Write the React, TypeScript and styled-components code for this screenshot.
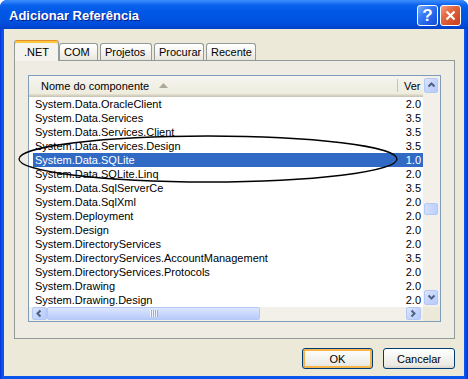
import React from 'react';
import styled, { createGlobalStyle } from 'styled-components';

const GlobalStyle = createGlobalStyle`
  html, body {
    margin: 0;
    padding: 0;
    background: #ffffff;
  }
  body {
    font-family: "Liberation Sans", Arial, sans-serif;
    font-size: 11px;
    color: #000;
    overflow: hidden;
  }
`;

const items: { name: string; version: string }[] = [
  { name: 'System.Data.OracleClient', version: '2.0' },
  { name: 'System.Data.Services', version: '3.5' },
  { name: 'System.Data.Services.Client', version: '3.5' },
  { name: 'System.Data.Services.Design', version: '3.5' },
  { name: 'System.Data.SQLite', version: '1.0' },
  { name: 'System.Data.SQLite.Linq', version: '2.0' },
  { name: 'System.Data.SqlServerCe', version: '3.5' },
  { name: 'System.Data.SqlXml', version: '2.0' },
  { name: 'System.Deployment', version: '2.0' },
  { name: 'System.Design', version: '2.0' },
  { name: 'System.DirectoryServices', version: '2.0' },
  { name: 'System.DirectoryServices.AccountManagement', version: '3.5' },
  { name: 'System.DirectoryServices.Protocols', version: '2.0' },
  { name: 'System.Drawing', version: '2.0' },
  { name: 'System.Drawing.Design', version: '2.0' },
];

const tabs = [
  { label: '.NET', width: 45 },
  { label: 'COM', width: 39 },
  { label: 'Projetos', width: 52 },
  { label: 'Procurar', width: 50 },
  { label: 'Recente', width: 50 },
];

const Window = styled.div`
  position: relative;
  width: 468px;
  height: 379px;
  display: flex;
  flex-direction: column;
  background: linear-gradient(to right, #0831d9 0, #0a55ec 2px, #0a55ec 465px, #0831d9 468px);
  border-radius: 7px 7px 0 0;
  overflow: hidden;
`;

const TitleBar = styled.div`
  flex: none;
  height: 29px;
  display: flex;
  align-items: center;
  padding: 0 7px 0 9px;
  box-sizing: border-box;
  background: linear-gradient(
    to bottom,
    #3d8cff 0px,
    #2c7ff8 2px,
    #0a63ee 5px,
    #0058e6 11px,
    #0054e2 19px,
    #004ad8 25px,
    #0040c8 29px
  );
`;

const Title = styled.div`
  font-family: "Liberation Sans", Arial, sans-serif;
  font-weight: bold;
  font-size: 13px;
  color: #ffffff;
  text-shadow: 1px 1px 0 #0a1a8a;
  padding-top: 2px;
`;

const TitleButtons = styled.div`
  margin-left: auto;
  display: flex;
  gap: 2px;
  padding-top: 2px;
`;

const CaptionButton = styled.div<{ $kind: 'help' | 'close' }>`
  width: 21px;
  height: 21px;
  box-sizing: border-box;
  border: 1px solid #ffffff;
  border-radius: 3px;
  display: flex;
  align-items: center;
  justify-content: center;
  color: #ffffff;
  font-family: "Liberation Sans", Arial, sans-serif;
  font-weight: bold;
  font-size: 17px;
  background: ${p =>
    p.$kind === 'help'
      ? 'linear-gradient(135deg, #7fb0ff 0%, #3a7cf5 35%, #1f5fe6 70%, #1a4fd0 100%)'
      : 'linear-gradient(135deg, #f5a080 0%, #e36a42 35%, #d5502b 70%, #c0401f 100%)'};
`;

const Client = styled.div`
  flex: 1;
  margin: 0 4px 3px;
  background: #ece9d8;
  display: flex;
  flex-direction: column;
  padding: 11px 9px 7px 10px;
  min-height: 0;
`;

const TabStrip = styled.div`
  flex: none;
  height: 20px;
  display: flex;
  align-items: flex-end;
  gap: 2px;
`;

const Tab = styled.div<{ $active?: boolean; $w: number }>`
  position: relative;
  z-index: ${p => (p.$active ? 2 : 1)};
  box-sizing: border-box;
  width: ${p => p.$w}px;
  height: ${p => (p.$active ? 21 : 17)}px;
  margin-bottom: ${p => (p.$active ? -1 : 0)}px;
  margin-right: ${p => (p.$active ? -2 : 0)}px;
  padding-left: ${p => (p.$active ? 9 : 4)}px;
  padding-top: ${p => (p.$active ? 4 : 1)}px;
  line-height: 15px;
  white-space: nowrap;
  border: 1px solid #919b9c;
  border-bottom: none;
  border-radius: 3px 3px 0 0;
  background: ${p =>
    p.$active
      ? '#f4f3ee'
      : 'linear-gradient(to bottom, #ffffff 0%, #f4f3ee 55%, #e8e6dc 100%)'};
  ${p => p.$active && 'border-top: 1px solid #e68b2c; box-shadow: inset 0 2px 0 #ffc73c;'}
`;

const Panel = styled.div`
  flex: 1;
  min-height: 0;
  display: flex;
  border: 1px solid #919b9c;
  background: #efede3;
  padding: 14px 13px 16px 13px;
`;

const ListView = styled.div`
  flex: 1;
  display: grid;
  grid-template-columns: 1fr 17px;
  grid-template-rows: 1fr 14px;
  border: 1px solid #7f9db9;
  background: #ffffff;
  min-height: 0;
`;

const Content = styled.div`
  overflow: hidden;
  display: flex;
  flex-direction: column;
`;

const Header = styled.div`
  flex: none;
  height: 21px;
  display: grid;
  grid-template-columns: 369px 25px;
  background: linear-gradient(to bottom, #f6f5ef 0%, #ebeadb 100%);
  box-shadow: inset 0 -1px 0 #cbc7b8, inset 0 -2px 0 #d6d2c2, inset 0 -3px 0 #e2decd;
`;

const HeaderCell = styled.div<{ $pad: number; $divider?: boolean }>`
  position: relative;
  display: flex;
  align-items: center;
  gap: 10px;
  padding-left: ${p => p.$pad}px;
  padding-bottom: 2px;
  white-space: nowrap;
  overflow: hidden;
  ${p =>
    p.$divider &&
    `&::after {
      content: '';
      position: absolute;
      right: 0;
      top: 3px;
      bottom: 5px;
      width: 1px;
      background: #c7c5b2;
      box-shadow: 1px 0 0 #ffffff;
    }`}
`;

const Row = styled.div<{ $selected?: boolean }>`
  flex: none;
  height: 14px;
  margin-left: 4px;
  display: grid;
  grid-template-columns: 365px 25px;
  line-height: 14px;
  white-space: nowrap;
  background: ${p => (p.$selected ? '#316ac5' : 'transparent')};
  color: ${p => (p.$selected ? '#ffffff' : '#000000')};
`;

const NameCell = styled.div`
  padding-left: 2px;
  overflow: hidden;
`;

const VersionCell = styled.div`
  text-align: right;
  padding-right: 2px;
`;

const VScroll = styled.div`
  display: flex;
  flex-direction: column;
  background: #f2f0e8;
`;

const HScroll = styled.div`
  display: flex;
  align-items: stretch;
  background: #f2f0e8;
`;

const Corner = styled.div`
  background: #ece9d8;
`;

const ScrollButton = styled.div<{ $dir: 'v' | 'h' }>`
  flex: none;
  box-sizing: border-box;
  width: ${p => (p.$dir === 'v' ? '14px' : '15px')};
  height: ${p => (p.$dir === 'v' ? '15px' : '13px')};
  margin: ${p => (p.$dir === 'v' ? '2px 2px 2px 1px' : '0 0 1px 0')};
  border: 1px solid #b4c8f6;
  border-radius: 2px;
  background: linear-gradient(135deg, #dce6fe 0%, #c5d5fc 50%, #b6cafa 100%);
  display: flex;
  align-items: center;
  justify-content: center;
`;

const VTrack = styled.div`
  flex: 1;
`;

const VThumb = styled.div`
  width: 14px;
  height: 12px;
  margin-left: 1px;
  box-sizing: border-box;
  border: 1px solid #b4c8f6;
  border-radius: 2px;
  background: linear-gradient(to right, #d2defc, #bcd0fb);
`;

const HThumb = styled.div`
  flex: none;
  box-sizing: border-box;
  height: 13px;
  border: 1px solid #b4c8f6;
  border-radius: 2px;
  background: linear-gradient(to bottom, #dce6fe 0%, #c5d5fc 60%, #b9cbf9 100%);
  display: flex;
  align-items: center;
  justify-content: center;
`;

const HTrack = styled.div`
  flex: 1;
`;

const ButtonRow = styled.div`
  flex: none;
  margin-top: 9px;
  display: flex;
  justify-content: flex-end;
  gap: 10px;
`;

const PushButton = styled.div<{ $default?: boolean; $w: number }>`
  box-sizing: border-box;
  width: ${p => p.$w}px;
  height: 21px;
  border: 1px solid #003c74;
  border-radius: 3px;
  display: flex;
  align-items: center;
  justify-content: center;
  background: linear-gradient(to bottom, #ffffff 0%, #f4f4f0 45%, #ebeae3 85%, #d8d4c8 100%);
  box-shadow: ${p => (p.$default ? 'inset 0 0 0 2px #f6b44a' : 'none')};
`;

const Overlay = styled.svg`
  position: absolute;
  left: 0;
  top: 0;
  pointer-events: none;
`;

const Chevron: React.FC<{ dir: 'up' | 'down' | 'left' | 'right' }> = ({ dir }) => {
  const paths = {
    up: 'M1.5 5.5 L4.5 2.5 L7.5 5.5',
    down: 'M1.5 2.5 L4.5 5.5 L7.5 2.5',
    left: 'M5.5 1.5 L2.5 4.5 L5.5 7.5',
    right: 'M2.5 1.5 L5.5 4.5 L2.5 7.5',
  };
  return (
    <svg width="9" height="9" viewBox="0 0 9 9">
      <path d={paths[dir]} fill="none" stroke="#4d6185" strokeWidth="2" />
    </svg>
  );
};

const SortArrow = () => (
  <svg width="9" height="5" viewBox="0 0 9 5">
    <path d="M0 5 L4.5 0 L9 5 Z" fill="#aca899" />
  </svg>
);

const Grip = () => (
  <svg width="8" height="7" viewBox="0 0 8 7">
    {[0, 2, 4, 6].map(x => (
      <g key={x}>
        <rect x={x} y={0} width={1} height={7} fill="#eef4fe" />
        <rect x={x + 1} y={0} width={1} height={7} fill="#8cb0f8" />
      </g>
    ))}
  </svg>
);

export default function App() {
  return (
    <>
      <GlobalStyle />
      <Window>
        <TitleBar>
          <Title>Adicionar Referência</Title>
          <TitleButtons>
            <CaptionButton $kind="help">?</CaptionButton>
            <CaptionButton $kind="close">
              <svg width="11" height="11" viewBox="0 0 11 11">
                <path d="M1.5 1.5 L9.5 9.5 M9.5 1.5 L1.5 9.5" stroke="#ffffff" strokeWidth="2.2" />
              </svg>
            </CaptionButton>
          </TitleButtons>
        </TitleBar>
        <Client>
          <TabStrip>
            {tabs.map((t, i) => (
              <Tab key={t.label} $w={t.width} $active={i === 0}>
                {t.label}
              </Tab>
            ))}
          </TabStrip>
          <Panel>
            <ListView>
              <Content>
                <Header>
                  <HeaderCell $pad={12} $divider>
                    Nome do componente
                    <SortArrow />
                  </HeaderCell>
                  <HeaderCell $pad={6}>Ver</HeaderCell>
                </Header>
                {items.map(it => (
                  <Row key={it.name} $selected={it.name === 'System.Data.SQLite'}>
                    <NameCell>{it.name}</NameCell>
                    <VersionCell>{it.version}</VersionCell>
                  </Row>
                ))}
              </Content>
              <VScroll>
                <ScrollButton $dir="v">
                  <Chevron dir="up" />
                </ScrollButton>
                <VTrack>
                  <VThumb style={{ marginTop: 108 }} />
                </VTrack>
                <ScrollButton $dir="v">
                  <Chevron dir="down" />
                </ScrollButton>
              </VScroll>
              <HScroll>
                <ScrollButton $dir="h" style={{ marginLeft: 3 }}>
                  <Chevron dir="left" />
                </ScrollButton>
                <HThumb style={{ width: 213 }}>
                  <Grip />
                </HThumb>
                <HTrack />
                <ScrollButton $dir="h" style={{ marginRight: 2 }}>
                  <Chevron dir="right" />
                </ScrollButton>
              </HScroll>
              <Corner />
            </ListView>
          </Panel>
          <ButtonRow>
            <PushButton $w={71} $default>
              OK
            </PushButton>
            <PushButton $w={72}>Cancelar</PushButton>
          </ButtonRow>
        </Client>
        <Overlay width="468" height="379" viewBox="0 0 468 379">
          <ellipse cx="208" cy="159" rx="189" ry="23" fill="none" stroke="#000000" strokeWidth="1.3" />
        </Overlay>
      </Window>
    </>
  );
}
